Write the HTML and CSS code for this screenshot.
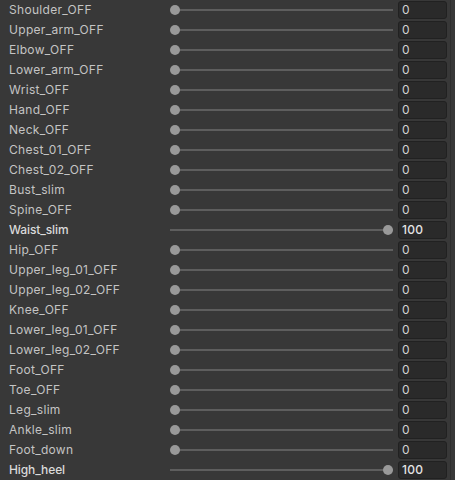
FILE: index.html
```html
<!DOCTYPE html>
<html>
<head>
<meta charset="utf-8">
<link rel="stylesheet" href="styles.css">
</head>
<body>
<div class="list">
  <div class="row"><span class="label">Shoulder_OFF</span><div class="slider"><div class="track zero"></div><div class="knob" style="left:0px"></div></div><div class="field">0</div></div>
  <div class="row"><span class="label">Upper_arm_OFF</span><div class="slider"><div class="track zero"></div><div class="knob" style="left:0px"></div></div><div class="field">0</div></div>
  <div class="row"><span class="label">Elbow_OFF</span><div class="slider"><div class="track zero"></div><div class="knob" style="left:0px"></div></div><div class="field">0</div></div>
  <div class="row"><span class="label">Lower_arm_OFF</span><div class="slider"><div class="track zero"></div><div class="knob" style="left:0px"></div></div><div class="field">0</div></div>
  <div class="row"><span class="label">Wrist_OFF</span><div class="slider"><div class="track zero"></div><div class="knob" style="left:0px"></div></div><div class="field">0</div></div>
  <div class="row"><span class="label">Hand_OFF</span><div class="slider"><div class="track zero"></div><div class="knob" style="left:0px"></div></div><div class="field">0</div></div>
  <div class="row"><span class="label">Neck_OFF</span><div class="slider"><div class="track zero"></div><div class="knob" style="left:0px"></div></div><div class="field">0</div></div>
  <div class="row"><span class="label">Chest_01_OFF</span><div class="slider"><div class="track zero"></div><div class="knob" style="left:0px"></div></div><div class="field">0</div></div>
  <div class="row"><span class="label">Chest_02_OFF</span><div class="slider"><div class="track zero"></div><div class="knob" style="left:0px"></div></div><div class="field">0</div></div>
  <div class="row"><span class="label">Bust_slim</span><div class="slider"><div class="track zero"></div><div class="knob" style="left:0px"></div></div><div class="field">0</div></div>
  <div class="row"><span class="label">Spine_OFF</span><div class="slider"><div class="track zero"></div><div class="knob" style="left:0px"></div></div><div class="field">0</div></div>
  <div class="row mod"><span class="label">Waist_slim</span><div class="slider"><div class="track"></div><div class="knob" style="left:213px"></div></div><div class="field">100</div></div>
  <div class="row"><span class="label">Hip_OFF</span><div class="slider"><div class="track zero"></div><div class="knob" style="left:0px"></div></div><div class="field">0</div></div>
  <div class="row"><span class="label">Upper_leg_01_OFF</span><div class="slider"><div class="track zero"></div><div class="knob" style="left:0px"></div></div><div class="field">0</div></div>
  <div class="row"><span class="label">Upper_leg_02_OFF</span><div class="slider"><div class="track zero"></div><div class="knob" style="left:0px"></div></div><div class="field">0</div></div>
  <div class="row"><span class="label">Knee_OFF</span><div class="slider"><div class="track zero"></div><div class="knob" style="left:0px"></div></div><div class="field">0</div></div>
  <div class="row"><span class="label">Lower_leg_01_OFF</span><div class="slider"><div class="track zero"></div><div class="knob" style="left:0px"></div></div><div class="field">0</div></div>
  <div class="row"><span class="label">Lower_leg_02_OFF</span><div class="slider"><div class="track zero"></div><div class="knob" style="left:0px"></div></div><div class="field">0</div></div>
  <div class="row"><span class="label">Foot_OFF</span><div class="slider"><div class="track zero"></div><div class="knob" style="left:0px"></div></div><div class="field">0</div></div>
  <div class="row"><span class="label">Toe_OFF</span><div class="slider"><div class="track zero"></div><div class="knob" style="left:0px"></div></div><div class="field">0</div></div>
  <div class="row"><span class="label">Leg_slim</span><div class="slider"><div class="track zero"></div><div class="knob" style="left:0px"></div></div><div class="field">0</div></div>
  <div class="row"><span class="label">Ankle_slim</span><div class="slider"><div class="track zero"></div><div class="knob" style="left:0px"></div></div><div class="field">0</div></div>
  <div class="row"><span class="label">Foot_down</span><div class="slider"><div class="track zero"></div><div class="knob" style="left:0px"></div></div><div class="field">0</div></div>
  <div class="row mod"><span class="label">High_heel</span><div class="slider"><div class="track"></div><div class="knob" style="left:213px"></div></div><div class="field">100</div></div>
</div>
</body>
</html>
```

FILE: styles.css
```css
html, body {
  margin: 0;
  padding: 0;
  background: #383838;
  width: 455px;
  height: 480px;
  overflow: hidden;
}
body {
  font-family: Inter, "Noto Sans", sans-serif;
  font-size: 12px;
  color: #c4c4c4;
}
.list {
  display: flex;
  flex-direction: column;
  border-right: 1px solid #2e2e2e;
  width: 450px;
  height: 480px;
}
.row {
  height: 20px;
  display: flex;
  align-items: center;
}
.label {
  width: 161px;
  padding-left: 9px;
  white-space: nowrap;
  overflow: hidden;
  letter-spacing: 0.3px;
  line-height: 19px;
  padding-bottom: 1px;
}
.slider {
  position: relative;
  width: 223px;
  height: 20px;
}
.track {
  position: absolute;
  left: 0;
  right: 0;
  top: 9px;
  height: 2px;
  background: #5e5e5e;
}
.track.zero {
  left: 5px;
}
.knob {
  position: absolute;
  top: 5px;
  width: 10px;
  height: 10px;
  border-radius: 50%;
  background: #999999;
}
.field {
  margin-left: 5px;
  width: 47px;
  height: 16px;
  box-sizing: content-box;
  border: 1px solid #212121;
  border-radius: 3px;
  background: #2a2a2a;
  color: #d2d2d2;
  line-height: 16px;
  text-indent: 3px;
  letter-spacing: 0.3px;
}
.mod .label {
  font-weight: 500;
  letter-spacing: -0.1px;
  color: #dadada;
}
.mod .field {
  font-weight: 500;
  color: #e4e4e4;
}
```
